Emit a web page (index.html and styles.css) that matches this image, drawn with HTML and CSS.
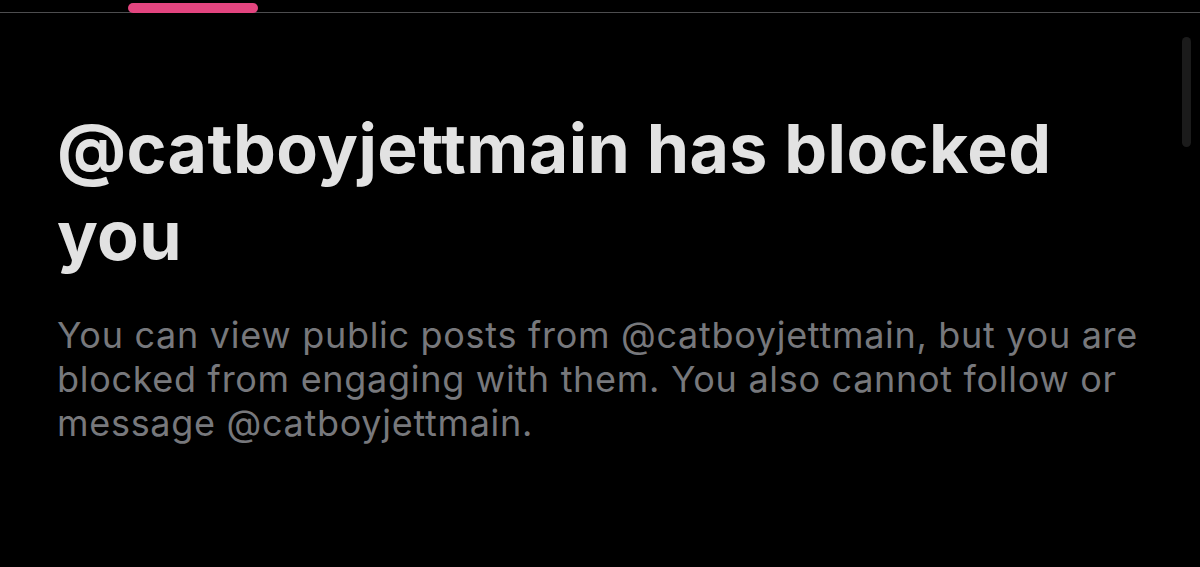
FILE: index.html
```html
<!DOCTYPE html>
<html>

<head>
  <meta charset="utf-8">
  <link rel="stylesheet" href="styles.css">
</head>

<body>

  <div class="tabs">
    <div class="tabIndicator"></div>
  </div>

  <main class="blockedNotice">
    <h1 class="blockedTitle">@catboyjettmain has blocked you</h1>
    <p class="blockedText">You can view public posts from @catboyjettmain, but you are blocked from engaging with them. You also cannot follow or message @catboyjettmain.</p>
  </main>

  <div class="scrollThumb"></div>

</body>

</html>
```

FILE: styles.css
```css
html,
body {
  margin: 0;
  height: 100%;
  background-color: #000;
  overflow: hidden;
}

body {
  font-family: Inter, "Liberation Sans", Arial, sans-serif;
}

.tabs {
  height: 12px;
  display: flex;
  align-items: flex-end;
  border-bottom: 1px solid #4d4d4f;
}

.tabIndicator {
  position: relative;
  width: 130px;
  height: 10px;
  margin-left: 128px;
  margin-bottom: -1px;
  border-radius: 5px;
  background-color: #e3457f;
}

.blockedNotice {
  width: 1088px;
  padding-left: 57px;
}

.blockedTitle {
  margin: 92px 0 0 0;
  font-size: 68px;
  line-height: 87px;
  letter-spacing: 0.4px;
  font-weight: 700;
  color: #e2e2e2;
}

.blockedText {
  margin: 34px 0 0 0;
  font-size: 36px;
  line-height: 44px;
  letter-spacing: 0.7px;
  color: #77787c;
}

.scrollThumb {
  position: absolute;
  top: 37px;
  left: 1182px;
  width: 9px;
  height: 110px;
  border-radius: 5px;
  background-color: #1b1b1b;
}
```
